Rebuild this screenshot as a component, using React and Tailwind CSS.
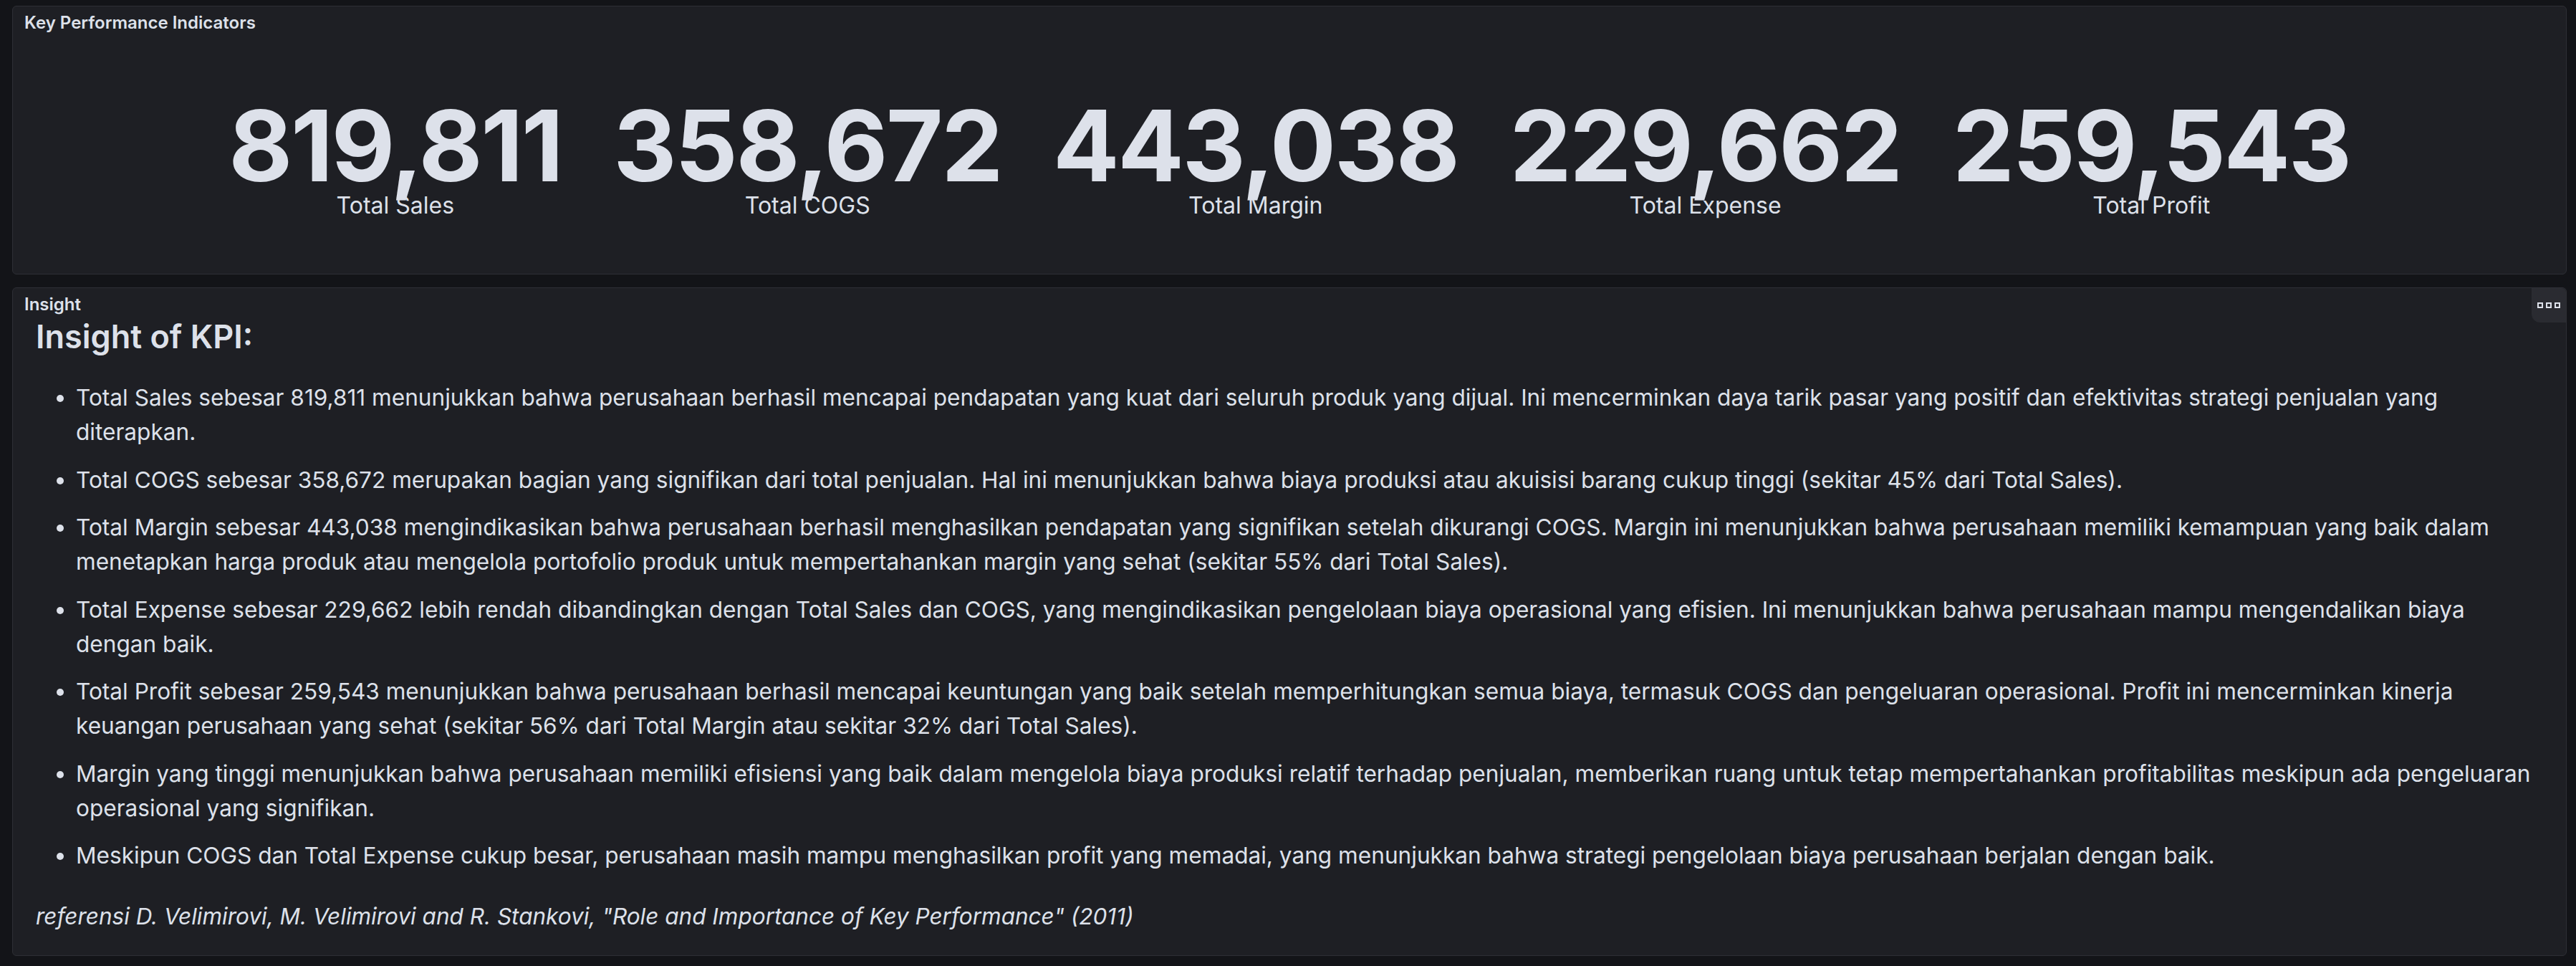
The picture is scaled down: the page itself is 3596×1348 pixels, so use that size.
import React from "react";

const kpis = [
  { value: "819,811", label: "Total Sales" },
  { value: "358,672", label: "Total COGS" },
  { value: "443,038", label: "Total Margin" },
  { value: "229,662", label: "Total Expense" },
  { value: "259,543", label: "Total Profit" },
];

const insights = [
  "Total Sales sebesar 819,811 menunjukkan bahwa perusahaan berhasil mencapai pendapatan yang kuat dari seluruh produk yang dijual. Ini mencerminkan daya tarik pasar yang positif dan efektivitas strategi penjualan yang diterapkan.",
  "Total COGS sebesar 358,672 merupakan bagian yang signifikan dari total penjualan. Hal ini menunjukkan bahwa biaya produksi atau akuisisi barang cukup tinggi (sekitar 45% dari Total Sales).",
  "Total Margin sebesar 443,038 mengindikasikan bahwa perusahaan berhasil menghasilkan pendapatan yang signifikan setelah dikurangi COGS. Margin ini menunjukkan bahwa perusahaan memiliki kemampuan yang baik dalam menetapkan harga produk atau mengelola portofolio produk untuk mempertahankan margin yang sehat (sekitar 55% dari Total Sales).",
  "Total Expense sebesar 229,662 lebih rendah dibandingkan dengan Total Sales dan COGS, yang mengindikasikan pengelolaan biaya operasional yang efisien. Ini menunjukkan bahwa perusahaan mampu mengendalikan biaya dengan baik.",
  "Total Profit sebesar 259,543 menunjukkan bahwa perusahaan berhasil mencapai keuntungan yang baik setelah memperhitungkan semua biaya, termasuk COGS dan pengeluaran operasional. Profit ini mencerminkan kinerja keuangan perusahaan yang sehat (sekitar 56% dari Total Margin atau sekitar 32% dari Total Sales).",
  "Margin yang tinggi menunjukkan bahwa perusahaan memiliki efisiensi yang baik dalam mengelola biaya produksi relatif terhadap penjualan, memberikan ruang untuk tetap mempertahankan profitabilitas meskipun ada pengeluaran operasional yang signifikan.",
  "Meskipun COGS dan Total Expense cukup besar, perusahaan masih mampu menghasilkan profit yang memadai, yang menunjukkan bahwa strategi pengelolaan biaya perusahaan berjalan dengan baik.",
];

function PanelTitle({ children }) {
  return (
    <div className="pt-[7px] pl-[16px] h-[40px]">
      <h6 className="text-[24px] leading-[32px] font-semibold text-[#dde1ea]">
        {children}
      </h6>
    </div>
  );
}

function App() {
  return (
    <div className="w-full h-[1348px] bg-[#131418] pl-[17px] pr-[13px] pt-[8px] flex flex-col gap-[18px] font-[Inter,sans-serif] text-[#dde1ea]">
      {/* KPI stat panel */}
      <div className="h-[375px] bg-[#1e1f24] border border-[#2e2f35] rounded-[6px] flex flex-col">
        <PanelTitle>Key Performance Indicators</PanelTitle>
        <div className="flex justify-center gap-[72px] mt-[88px]">
          {kpis.map((k) => (
            <div key={k.label} className="flex flex-col items-center">
              <div className="text-[137px] leading-[132px] font-bold tracking-[-0.018em]">
                {k.value}
              </div>
              <div className="text-[32px] leading-[38px] -mt-[1px]">{k.label}</div>
            </div>
          ))}
        </div>
      </div>

      {/* Insight text panel */}
      <div className="relative h-[933px] bg-[#1e1f24] border border-[#2e2f35] rounded-[6px]">
        <PanelTitle>Insight</PanelTitle>
        <button className="absolute top-0 right-0 w-[48px] h-[48px] bg-[#2a2b31] rounded-bl-[12px] rounded-tr-[6px] flex items-center justify-center gap-[4px]">
          <span className="w-[8px] h-[8px] border-2 border-[#dde1ea]" />
          <span className="w-[8px] h-[8px] border-2 border-[#dde1ea]" />
          <span className="w-[8px] h-[8px] border-2 border-[#dde1ea]" />
        </button>
        <div className="pl-[32px] pr-[33px]">
          <h2 className="text-[45px] leading-[54px] font-semibold mt-[1px]">
            Insight of KPI:
          </h2>
          <ul className="list-disc pl-[56px] mt-[34px] text-[31.6px] leading-[48px] flex flex-col gap-[18.5px]">
            {insights.map((t, i) => (
              <li key={i}>{t}</li>
            ))}
          </ul>
          <p className="italic text-[31.5px] leading-[48px] mt-[37px]">
            referensi D. Velimirovi, M. Velimirovi and R. Stankovi, "Role and
            Importance of Key Performance" (2011)
          </p>
        </div>
      </div>
    </div>
  );
}

export default App;
